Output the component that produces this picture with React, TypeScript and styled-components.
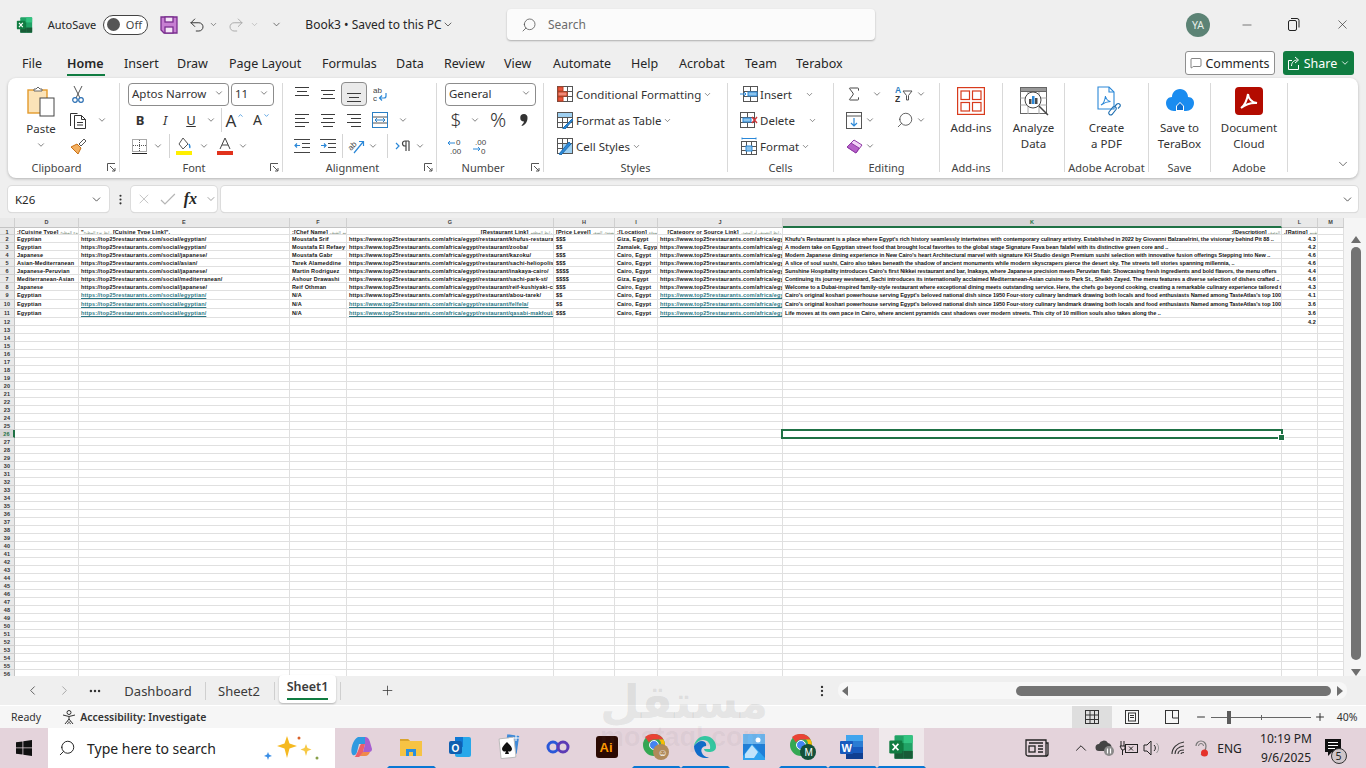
import React from 'react'
import styled, { createGlobalStyle } from 'styled-components'
import {
    ChevronDown, ChevronLeft, ChevronRight, ChevronUp, Minus, MoreHorizontal, MoreVertical,
    Plus, Redo2, Search, Undo2, X, MessageSquare, Sigma,
} from 'lucide-react'

const UI = '"Noto Sans", "Liberation Sans", sans-serif'
const GREEN = '#1f7145'
const INK = '#3b3b3b'

const GlobalStyle = createGlobalStyle`
    html, body { margin: 0; padding: 0; background: #efefef; }
    * { box-sizing: border-box; }
    body { font-family: ${UI}; color: #262626; }
`

const Page = styled.div`
    position: relative;
    width: 1366px;
    height: 768px;
    overflow: hidden;
    background: #efefef;
    display: flex;
    flex-direction: column;
`

/* ---- title bar ---- */

const TitleBar = styled.div`
    height: 45px;
    padding-top: 4px;
    display: flex;
    align-items: center;
    font-size: 12px;
    flex: none;
`
const Slot = styled.div<{ $w: number; $ml?: number }>`
    width: ${p => p.$w}px;
    margin-left: ${p => p.$ml ?? 0}px;
    flex: none;
    display: flex;
    align-items: center;
    justify-content: center;
    white-space: nowrap;
`
const AutoSaveText = styled(Slot)`
    font-size: 11px;
`
const Toggle = styled.div`
    width: 45px;
    height: 20px;
    border: 1px solid #444;
    border-radius: 10px;
    background: #fff;
    display: flex;
    align-items: center;
    padding: 0 5px 0 3px;
    justify-content: space-between;
    font-size: 11px;
    color: #444;
    &::before { content: ''; width: 13px; height: 13px; border-radius: 50%; background: #555; }
`
const SearchBox = styled.div`
    width: 368px;
    height: 31px;
    margin-left: 53px;
    background: #fbfbfb;
    border-radius: 4px;
    box-shadow: 0 1px 2px rgba(0,0,0,.28);
    display: flex;
    align-items: center;
    gap: 11px;
    padding-left: 14px;
    color: #6b6b6b;
    font-size: 12px;
`
const Flip = styled.span`
    display: flex;
    transform: scaleX(-1);
`
const Avatar = styled.div`
    width: 24px;
    height: 24px;
    border-radius: 50%;
    background: #5c8375;
    color: #e6efe9;
    font-size: 10.5px;
    display: flex;
    align-items: center;
    justify-content: center;
`

/* ---- menu tabs ---- */

const TabRow = styled.div`
    height: 33px;
    flex: none;
    display: flex;
    align-items: center;
    padding: 3px 12px 0 22px;
    font-size: 12.5px;
`
const MenuTab = styled.div<{ $w: number; $active?: boolean }>`
    width: ${p => p.$w}px;
    flex: none;
    white-space: nowrap;
    font-weight: ${p => p.$active ? 600 : 400};
    position: relative;
    ${p => p.$active && `
        &::after {
            content: '';
            position: absolute;
            left: 0;
            width: 38px;
            bottom: -4px;
            height: 2px;
            background: #107c41;
        }
    `}
`
const CommentsBtn = styled.div`
    margin-left: auto;
    width: 90px;
    height: 24px;
    background: #fff;
    border: 1px solid #8f8f8f;
    border-radius: 3px;
    display: flex;
    align-items: center;
    justify-content: center;
    gap: 3px;
`
const ShareBtn = styled.div`
    margin-left: 8px;
    width: 71px;
    height: 24px;
    background: #107c41;
    color: #fff;
    border-radius: 3px;
    display: flex;
    align-items: center;
    justify-content: center;
    gap: 3px;
`

/* ---- ribbon ---- */

const Ribbon = styled.div`
    height: 100px;
    margin: 0 8px;
    flex: none;
    background: #fff;
    border-radius: 8px;
    box-shadow: 0 1px 3px rgba(0,0,0,.25);
    display: flex;
    padding-top: 3px;
    font-size: 11.5px;
    color: #333;
`
const Group = styled.div<{ $w: number; $pad?: number }>`
    width: ${p => p.$w}px;
    flex: none;
    position: relative;
    display: flex;
    flex-direction: column;
    padding-left: ${p => p.$pad ?? 0}px;
`
const Divider = styled.div`
    width: 1px;
    flex: none;
    margin: 2px 0 6px;
    background: #d9d9d9;
`
const GroupBody = styled.div`
    height: 78px;
    flex: none;
`
const Row = styled.div`
    height: 26px;
    display: flex;
    align-items: center;
`
const GroupLabel = styled.div`
    height: 16px;
    display: flex;
    align-items: center;
    justify-content: center;
    font-size: 11px;
    color: #444;
    white-space: nowrap;
`
const LabelSpan = styled(GroupLabel)<{ $pad: number; $launch?: boolean }>`
    margin-left: -${p => p.$pad}px;
    padding-right: ${p => p.$launch ? 14 : 0}px;
`
const Launcher = styled.div`
    position: absolute;
    right: 3px;
    bottom: 6px;
    width: 9px;
    height: 9px;
    display: flex;
`
const Tool = styled.div<{ $w: number; $on?: boolean }>`
    width: ${p => p.$w}px;
    height: 24px;
    flex: none;
    display: flex;
    align-items: center;
    justify-content: center;
    ${p => p.$on && `background: #eaeaea; border: 1px solid #8c8c8c; border-radius: 4px;`}
    svg { flex: none; }
`
const Glyph = styled.span<{ $s: number; $light?: boolean }>`
    font-size: ${p => p.$s}px;
    font-weight: ${p => p.$light ? 300 : 400};
    line-height: 1;
    color: #333;
`
const Caret = styled.span`
    align-self: flex-start;
    margin: 4px 0 0 1px;
    display: flex;
`
const VSep = styled.div<{ $ml: number; $mr?: number }>`
    width: 1px;
    height: 24px;
    flex: none;
    margin-left: ${p => p.$ml}px;
    margin-right: ${p => p.$mr ?? 0}px;
    background: #d4d4d4;
`
const Select = styled.div<{ $w: number; $ml?: number }>`
    width: ${p => p.$w}px;
    margin-left: ${p => p.$ml ?? 0}px;
    height: 23px;
    flex: none;
    border: 1px solid #8c8c8c;
    border-radius: 4px;
    display: flex;
    align-items: center;
    justify-content: space-between;
    padding: 0 4px 2px 3px;
    font-size: 11.5px;
`
const StyleItem = styled.div`
    height: 26px;
    display: flex;
    align-items: center;
    gap: 2px;
    white-space: nowrap;
    font-size: 11.5px;
`
const ItemChev = styled.span<{ $ml?: number }>`
    margin-left: ${p => p.$ml ?? 0}px;
    display: flex;
`
const PasteCol = styled.div`
    width: 50px;
    display: flex;
    flex-direction: column;
    align-items: center;
    padding-top: 5px;
    font-size: 11.5px;
    gap: 4px;
`
const ClipWrap = styled.div`
    display: flex;
    height: 78px;
`
const BigBody = styled.div`
    height: 78px;
    flex: none;
    display: flex;
    flex-direction: column;
    align-items: center;
    padding-top: 5px;
    font-size: 11.5px;
    line-height: 16px;
    text-align: center;
    white-space: nowrap;
`
const BigIcon = styled.div`
    height: 30px;
    margin-bottom: 4px;
    display: flex;
    align-items: center;
`
const Collapse = styled.div`
    margin-left: auto;
    align-self: flex-end;
    padding: 0 8px 7px 0;
    display: flex;
`

/* ---- formula bar ---- */

const FormulaBar = styled.div`
    height: 26px;
    margin: 8px 8px 6px;
    flex: none;
    display: flex;
    align-items: stretch;
`
const BarBox = styled.div<{ $w?: number }>`
    ${p => p.$w ? `width: ${p.$w}px; flex: none;` : 'flex: 1;'}
    background: #fff;
    border-radius: 4px;
    box-shadow: 0 0 0 1px #dcdcdc, 0 1px 1px rgba(0,0,0,.15);
    display: flex;
    align-items: center;
`
const NameBox = styled(BarBox)`
    justify-content: space-between;
    padding: 0 6px 0 7px;
    font-size: 11.5px;
`
const FxBox = styled(BarBox)`
    gap: 8px;
    padding-left: 5px;
    font-family: "Liberation Serif", serif;
    font-style: italic;
    font-weight: 700;
    font-size: 16px;
`
const FormulaInput = styled(BarBox)`
    margin-left: 4px;
    justify-content: flex-end;
    padding-right: 4px;
`
const BarDots = styled.div`
    width: 22px;
    flex: none;
    display: flex;
    align-items: center;
    justify-content: center;
`

/* ---- sheet ---- */

const SheetWrap = styled.div`
    height: 458px;
    flex: none;
    display: flex;
    background: #f5f5f5;
`
const COLS = [15, 64, 211, 57, 207, 61, 43, 125, 499, 36, 26]
const ROW_TRACKS = '10px 7px repeat(7, 8px) repeat(3, 9px) repeat(45, 8px)'
const SheetGrid = styled.div`
    width: 1344px;
    flex: none;
    height: 458px;
    overflow: hidden;
    display: grid;
    grid-template-columns: ${COLS.map(c => c + 'px').join(' ')};
    grid-template-rows: ${ROW_TRACKS};
    background: #fff;
    font-family: "Liberation Sans", sans-serif;
    font-size: 5.5px;
    letter-spacing: .15px;
    font-weight: 700;
    color: #111;
    line-height: 8px;
`
const ColHead = styled.div<{ $on?: boolean }>`
    background: ${p => p.$on ? '#d6d6d6' : '#e9e9e9'};
    border-right: 1px solid #d0d0d0;
    border-bottom: ${p => p.$on ? `2px solid ${GREEN}` : '1px solid #c4c4c4'};
    color: ${p => p.$on ? GREEN : '#444'};
    text-align: center;
    line-height: 9px;
`
const RowHead = styled.div<{ $on?: boolean }>`
    background: ${p => p.$on ? '#d6d6d6' : '#e9e9e9'};
    border-bottom: 1px solid #d0d0d0;
    border-right: ${p => p.$on ? `2px solid ${GREEN}` : '1px solid #c4c4c4'};
    color: ${p => p.$on ? GREEN : '#333'};
    text-align: center;
    overflow: hidden;
`
const Cell = styled.div<{ $align?: string }>`
    position: relative;
    border-right: 1px solid #e0e0e0;
    border-bottom: 1px solid #e0e0e0;
    padding: 0 1px 0 2px;
    white-space: nowrap;
    overflow: hidden;
    text-align: ${p => p.$align ?? 'left'};
`
const DescCell = styled(Cell)`
    letter-spacing: -.05px;
`
const SelectedCell = styled(Cell)`
    overflow: visible;
    z-index: 2;
`
const SelBox = styled.div`
    position: absolute;
    inset: -1px -2px -2px -2px;
    border: 2px solid ${GREEN};
    &::after {
        content: '';
        position: absolute;
        right: -3px;
        bottom: -3px;
        width: 5px;
        height: 5px;
        background: ${GREEN};
        outline: 1px solid #fff;
    }
`
const CellLink = styled.span`
    color: #2b7683;
    text-decoration: underline;
`
const Ar = styled.span`
    font-family: "DejaVu Sans", sans-serif;
    font-size: 4px;
    font-weight: 400;
    letter-spacing: 0;
    color: #7d8f7d;
`
const VScroll = styled.div`
    width: 22px;
    flex: none;
    display: flex;
    flex-direction: column;
    align-items: center;
    padding: 18px 0 0 1px;
`
const ArrowUp = styled.div`
    width: 0;
    height: 0;
    border-left: 5px solid transparent;
    border-right: 5px solid transparent;
    border-bottom: 7px solid #6e6e6e;
`
const ArrowDown = styled(ArrowUp)`
    border-bottom: 0;
    border-top: 7px solid #6e6e6e;
`
const VThumb = styled.div`
    width: 10px;
    height: 419px;
    margin: 4px 0 9px;
    border-radius: 5px;
    background: #737373;
`

/* ---- sheet tabs + status ---- */

const TabsBar = styled.div`
    height: 30px;
    flex: none;
    display: flex;
    align-items: center;
    font-size: 13px;
    color: #3b3b3b;
    border-bottom: 1px solid #fff;
`
const SheetTab = styled.div<{ $w: number; $ml?: number }>`
    width: ${p => p.$w}px;
    margin-left: ${p => p.$ml ?? 0}px;
    flex: none;
    text-align: center;
`
const ActiveTab = styled.div`
    width: 57px;
    height: 28px;
    margin: -3px 0 0 4px;
    flex: none;
    background: #fff;
    border-radius: 4px;
    box-shadow: 0 1px 2px rgba(0,0,0,.25);
    font-weight: 600;
    font-size: 12.5px;
    text-align: center;
    padding-top: 3px;
    position: relative;
    &::after {
        content: '';
        position: absolute;
        left: 8px;
        right: 8px;
        bottom: 3px;
        height: 2px;
        background: #107c41;
    }
`
const TabSep = styled.div<{ $ml?: number }>`
    width: 1px;
    height: 18px;
    flex: none;
    margin-left: ${p => p.$ml ?? 0}px;
    background: #cfcfcf;
`
const HScroll = styled.div`
    width: 509px;
    height: 17px;
    flex: none;
    margin-left: 8px;
    border-radius: 8px;
    background: #f7f7f7;
    display: flex;
    align-items: center;
    padding: 0 4px;
`
const ArrowLeft = styled.div`
    width: 0;
    height: 0;
    border-top: 5px solid transparent;
    border-bottom: 5px solid transparent;
    border-right: 6px solid #6e6e6e;
`
const ArrowRight = styled(ArrowLeft)`
    border-right: 0;
    border-left: 6px solid #6e6e6e;
`
const HThumb = styled.div`
    width: 315px;
    height: 10px;
    margin: 0 6px 0 auto;
    border-radius: 5px;
    background: #737373;
`
const StatusBar = styled.div`
    height: 22px;
    flex: none;
    background: #f6f6f6;
    display: flex;
    align-items: center;
    font-size: 10.5px;
    color: #333;
    padding-left: 11px;
`
const StatusStrong = styled.span`
    font-weight: 600;
    margin-left: 4px;
`
const ViewBtn = styled.div<{ $on?: boolean }>`
    width: 40px;
    height: 22px;
    flex: none;
    display: flex;
    align-items: center;
    justify-content: center;
    background: ${p => p.$on ? '#dedede' : 'transparent'};
    ${p => p.$on && 'margin-left: auto;'}
`
const ZoomTrack = styled.div`
    width: 100px;
    height: 1px;
    margin: 0 2px 0 3px;
    flex: none;
    background: #666;
    position: relative;
`
const ZoomThumb = styled.div`
    position: absolute;
    left: 16px;
    top: -6px;
    width: 4px;
    height: 13px;
    background: #5c5c5c;
`
const ZoomTick = styled.div`
    position: absolute;
    left: 50px;
    top: -2px;
    width: 1px;
    height: 5px;
    background: #666;
`

/* ---- taskbar ---- */

const Taskbar = styled.div`
    height: 40px;
    flex: none;
    background: #e4d3db;
    display: flex;
    align-items: stretch;
`
const StartBtn = styled.div`
    width: 48px;
    flex: none;
    display: flex;
    align-items: center;
    justify-content: center;
`
const TaskSearch = styled.div`
    width: 287px;
    flex: none;
    background: #fff;
    display: flex;
    align-items: center;
    padding: 0 10px 0 10px;
    gap: 11px;
    font-size: 14px;
    color: #222;
`
const SearchSpark = styled.div`
    margin-left: auto;
    display: flex;
`
const AppSlot = styled.div<{ $run?: boolean; $on?: boolean; $first?: boolean }>`
    width: 49px;
    flex: none;
    margin-left: ${p => p.$first ? 2.5 : 0}px;
    display: flex;
    align-items: center;
    justify-content: center;
    background: ${p => p.$on ? '#efe8eb' : 'transparent'};
    border-bottom: 2px solid ${p => p.$run ? '#0a78d4' : 'transparent'};
    border-left: 2px solid transparent;
    border-right: 2px solid transparent;
    background-clip: padding-box;
`
const TraySlot = styled.div<{ $w: number; $ml?: number }>`
    width: ${p => p.$w}px;
    margin-left: ${p => p.$ml ?? 0}px;
    flex: none;
    display: flex;
    align-items: center;
    justify-content: center;
    font-size: 12px;
    color: #222;
`
const Clock = styled(TraySlot)`
    flex-direction: column;
    gap: 5px;
    line-height: 14px;
`
const NotifSlot = styled(TraySlot)`
    position: relative;
    justify-content: flex-start;
`
const NotifBadge = styled.div`
    position: absolute;
    left: 6px;
    top: 20px;
    width: 16px;
    height: 16px;
    border-radius: 50%;
    border: 1px solid #333;
    background: #cfc6ca;
    font-size: 10.5px;
    display: flex;
    align-items: center;
    justify-content: center;
`
const Watermark = styled.div`
    position: absolute;
    left: 600px;
    top: 671px;
    font-family: "DejaVu Sans", sans-serif;
    font-weight: 700;
    font-size: 46px;
    line-height: 62px;
    color: rgba(110, 110, 110, .14);
    pointer-events: none;
`
const WatermarkSub = styled.div`
    position: absolute;
    left: 600px;
    top: 722px;
    font-family: "Liberation Sans", sans-serif;
    font-weight: 700;
    font-size: 27px;
    color: rgba(110, 110, 110, .07);
    pointer-events: none;
`

/* ---- drawn icons ---- */

const Chev = ({ s = 10, c = '#444' }: { s?: number; c?: string }) => <ChevronDown size={s} color={c} strokeWidth={1.6} />

const Svg = ({ w = 16, h = 16, children }: { w?: number; h?: number; children: React.ReactNode }) => (
    <svg width={w} height={h} viewBox={`0 0 ${w} ${h}`} fill="none" stroke={INK} strokeWidth={1}>{children}</svg>
)

const Lines = ({ rows }: { rows: [number, number, number][] }) => (
    <Svg w={16} h={16}>
        {rows.map(([x1, x2, y]) => <path key={y} d={`M${x1} ${y}.5H${x2}`} />)}
    </Svg>
)

const ExcelLogo = ({ s = 18 }: { s?: number }) => (
    <svg width={s} height={s} viewBox="0 0 20 20">
        <rect x="5" y="1" width="14" height="18" rx="1" fill="#21a366" />
        <rect x="12" y="1" width="7" height="6" fill="#33c481" />
        <rect x="5" y="7" width="7" height="6" fill="#107c41" />
        <rect x="12" y="13" width="7" height="6" fill="#185c37" />
        <rect x="5" y="13" width="7" height="6" fill="#185c37" />
        <rect x="1" y="5" width="10" height="10" rx="1" fill="#107c41" />
        <path d="M3.500 7.500l4.500 5M8 7.500l-4.500 5" stroke="#fff" strokeWidth="1.400" />
    </svg>
)

const SaveIcon = () => (
    <svg width="18" height="18" viewBox="0 0 18 18" fill="#c77fd2" stroke="#7a2f8f" strokeWidth="1.300">
        <path d="M1 1h16v16H4l-3-3z" />
        <rect x="5" y="1" width="8" height="5" fill="#f4e5f6" />
        <rect x="5" y="11" width="8" height="6" fill="#f4e5f6" />
    </svg>
)

const RestoreIc = () => (
    <svg width="12" height="13" viewBox="0 0 12 13" fill="none" stroke="#222">
        <rect x=".5" y="2.500" width="8" height="10" rx="1.500" />
        <path d="M3 .5h6a2 2 0 0 1 2 2v7" />
    </svg>
)

const ShareIc = () => (
    <svg width="14" height="14" viewBox="0 0 14 14" fill="none" stroke="#fff">
        <path d="M5 4.500H1.500v9h10V9" />
        <path d="M4.500 10c0-4 3-6 6-6M8 1l3.500 3L8 7" />
    </svg>
)

const PasteIcon = () => (
    <svg width="28" height="31" viewBox="0 0 28 31" fill="none">
        <rect x="1" y="4" width="19" height="23" fill="#fbe3b8" stroke="#e39a2c" strokeWidth="1.400" />
        <path d="M7 5V3h2l2-2 2 2h2v2z" fill="#fff" stroke="#666" />
        <rect x="13" y="12" width="14" height="18" fill="#fff" stroke="#444" />
    </svg>
)

const Cut = () => (
    <svg width="12" height="18" viewBox="0 0 12 18" fill="none">
        <path d="M2 1l6 12M10 1L4 13" stroke="#555" />
        <circle cx="3" cy="15" r="2.300" stroke="#2b6fb3" strokeWidth="1.200" />
        <circle cx="9" cy="15" r="2.300" stroke="#2b6fb3" strokeWidth="1.200" />
    </svg>
)

const CopyDoc = () => (
    <svg width="17" height="17" viewBox="0 0 17 17" fill="#fff" stroke="#333">
        <path d="M.5 14V1.500h7" fill="none" />
        <path d="M4.500 3.500h7l4 4v9h-11z" />
        <path d="M11.500 3.500v4h4M7 10.500h6M7 13h6" fill="none" />
    </svg>
)

const Painter = () => (
    <svg width="17" height="17" viewBox="0 0 17 17" fill="none">
        <path d="M1 9l6-3 4 4-3 6z" fill="#f3b061" stroke="#c96f12" />
        <path d="M9 6l5-5 2 2-5 5z" fill="#fff" stroke="#555" />
    </svg>
)

const Borders = () => (
    <svg width="15" height="15" viewBox="0 0 15 15" fill="none" stroke="#555" strokeDasharray="1 1">
        <rect x=".5" y=".5" width="14" height="12" />
        <path d="M7.500 1v11M1 6.500h13" />
        <path d="M0 14.500h15" stroke="#222" strokeDasharray="none" />
    </svg>
)

const FillColor = () => (
    <svg width="17" height="18" viewBox="0 0 17 18" fill="none">
        <path d="M7 1l5 6-5 5-4-5z" stroke="#555" fill="#fff" />
        <path d="M13 7c1 2 1.500 3 .5 4" stroke="#2b88d8" strokeWidth="1.400" />
        <rect y="14" width="16" height="4" fill="#ffef00" />
    </svg>
)

const FontColor = () => (
    <svg width="17" height="18" viewBox="0 0 17 18" fill="none" stroke="#444">
        <path d="M3 12L8 1l5 11M5 8h6" />
        <rect y="14" width="16" height="4" fill="#e1321c" stroke="none" />
    </svg>
)

const Wrap = () => (
    <svg width="16" height="17" viewBox="0 0 16 17" fill="none">
        <text x="0" y="7" fontSize="8" fill="#444" stroke="none" fontFamily="Liberation Sans">ab</text>
        <text x="0" y="15" fontSize="8" fill="#444" stroke="none" fontFamily="Liberation Sans">c</text>
        <path d="M13 7v3a2 2 0 0 1-2 2H7M9 9.500L6.500 12 9 14.500" stroke="#2b88d8" strokeWidth="1.200" />
    </svg>
)

const Merge = () => (
    <svg width="16" height="16" viewBox="0 0 16 16" fill="#fff" stroke="#2b7fc4">
        <rect x=".5" y=".5" width="15" height="15" />
        <path d="M1 5h14M1 11h14" stroke="#555" />
        <path d="M3 8h10M5 6L3 8l2 2M11 6l2 2-2 2" stroke="#2b7fc4" />
    </svg>
)

const Indent = ({ flip }: { flip?: boolean }) => (
    <svg width="16" height="14" viewBox="0 0 16 14" fill="none" stroke="#444">
        <path d="M0 .5h16M8 4.500h8M8 8.500h8M0 13.500h16" />
        <path d={flip ? 'M1 6.500h5M4 4.500l2 2-2 2' : 'M1 6.500h5M3 4.500l-2 2 2 2'} stroke="#2b88d8" strokeWidth="1.200" />
    </svg>
)

const Orient = () => (
    <svg width="17" height="17" viewBox="0 0 17 17" fill="none">
        <text x="0" y="10" fontSize="8" fill="#444" transform="rotate(-45 5 8)" fontFamily="Liberation Sans">ab</text>
        <path d="M6 15L15 4M11 3.500h4.500V8" stroke="#2b88d8" strokeWidth="1.200" />
    </svg>
)

const Rtl = () => (
    <svg width="17" height="12" viewBox="0 0 17 12" fill="none">
        <path d="M1 3l3 3-3 3" stroke="#2b88d8" strokeWidth="1.200" />
        <path d="M11 1v10M14 1v10M14 1H10a2.500 2.500 0 0 0 0 5h1" stroke="#444" strokeWidth="1.200" />
    </svg>
)

const DecMore = ({ out }: { out?: boolean }) => (
    <svg width="20" height="17" viewBox="0 0 20 17" fill="none">
        <text x={out ? 3 : 9} y="7" fontSize="8" fill="#444" fontFamily="Liberation Sans">{out ? '.00' : '0'}</text>
        <text x={out ? 9 : 3} y="16" fontSize="8" fill="#444" fontFamily="Liberation Sans">{out ? '0' : '.00'}</text>
        {out
            ? <path d="M1 11h7M6 9l2 2-2 2" stroke="#2b88d8" />
            : <path d="M1 5h7M3 3L1 5l2 2" stroke="#2b88d8" />}
    </svg>
)

const Comma = () => (
    <svg width="10" height="14" viewBox="0 0 10 14">
        <path d="M5 1a3.500 3.500 0 0 1 3.500 4C8.500 9 6 12 3 13l-.5-.6C4 11 5 9.500 5 8.500a3.500 3.500 0 0 1 0-7.500z" fill="#333" />
    </svg>
)

const Launch = () => (
    <svg width="9" height="9" viewBox="0 0 9 9" fill="none" stroke="#555">
        <path d="M.5 8V.5H8M3 3l5 5M8 5v3H5" />
    </svg>
)

const TableIcon = ({ children }: { children?: React.ReactNode }) => (
    <svg width="18" height="18" viewBox="0 0 18 18" fill="none" stroke="#555">
        <rect x="1.500" y="1.500" width="15" height="15" fill="#fff" />
        <path d="M1.500 6.500h15M1.500 11.500h15M6.500 1.500v15M11.500 1.500v15" />
        {children}
    </svg>
)

const CondFmt = () => (
    <TableIcon>
        <rect x="2" y="2" width="5" height="4" fill="#e8543f" stroke="#c43e1c" />
        <rect x="2" y="7" width="9" height="4" fill="#f08b7a" stroke="#c43e1c" />
        <rect x="2" y="12" width="5" height="4" fill="#e8543f" stroke="#c43e1c" />
    </TableIcon>
)
const FmtTable = () => (
    <TableIcon>
        <rect x="2" y="2" width="14" height="4" fill="#9fd0f1" stroke="none" />
        <path d="M7 17l9-9 1 1-8 9H7z" fill="#2b88d8" stroke="#1f6eb0" />
    </TableIcon>
)
const CellStyle = () => (
    <TableIcon>
        <rect x="7" y="7" width="9" height="9" fill="#9fd0f1" stroke="none" />
        <path d="M3 17l10-12 2 2-10 11z" fill="#2b88d8" stroke="#1f6eb0" />
    </TableIcon>
)
const InsertIc = () => (
    <svg width="18" height="16" viewBox="0 0 18 16" fill="none" stroke="#555">
        <rect x="3.500" y=".5" width="14" height="15" fill="#fff" />
        <path d="M3.500 5.500h14M3.500 10.500h14M10.500 1v14" />
        <rect x="8" y="6" width="9" height="4" fill="#8cc4ec" stroke="#2b88d8" />
        <path d="M0 8h6M4 6l2 2-2 2" stroke="#2b88d8" />
    </svg>
)
const DeleteIc = () => (
    <svg width="18" height="16" viewBox="0 0 18 16" fill="none" stroke="#555">
        <rect x=".5" y=".5" width="14" height="15" fill="#fff" />
        <path d="M.5 5.500h14M.5 10.500h14M7.500 1v14" />
        <rect x="3" y="6" width="8" height="4" fill="#8cc4ec" stroke="#2b88d8" />
        <path d="M12 5l5 6M17 5l-5 6" stroke="#d13438" strokeWidth="1.400" />
    </svg>
)
const FormatIc = () => (
    <svg width="18" height="18" viewBox="0 0 18 18" fill="none" stroke="#555">
        <rect x="1.500" y="4.500" width="15" height="13" fill="#fff" />
        <path d="M6.500 5v12M11.500 5v12M2 9.500h14M2 13.500h14" />
        <rect x="6" y="9" width="6" height="5" fill="#8cc4ec" stroke="#2b88d8" />
        <path d="M2 1.500h14M2 .5v2M16 .5v2" stroke="#2b88d8" />
    </svg>
)
const SortIc = () => (
    <svg width="18" height="18" viewBox="0 0 18 18" fill="none">
        <text x="0" y="8" fontSize="8.500" fill="#2b7fc4" fontFamily="Liberation Sans" fontWeight="700">A</text>
        <text x="0" y="17" fontSize="8.500" fill="#333" fontFamily="Liberation Sans" fontWeight="700">Z</text>
        <path d="M8 6h9l-3.500 4.500V15h-2v-4.500z" stroke="#555" />
    </svg>
)
const FillDown = () => (
    <svg width="16" height="17" viewBox="0 0 16 17" fill="none" stroke="#555">
        <rect x=".5" y=".5" width="15" height="16" fill="#fff" />
        <path d="M1 4h14" />
        <path d="M8 6v8M5 11l3 3 3-3" stroke="#2b88d8" strokeWidth="1.200" />
    </svg>
)
const Eraser = () => (
    <svg width="17" height="15" viewBox="0 0 17 15" fill="none">
        <path d="M1 8l7-7 8 5-6 8z" fill="#f3d4f7" stroke="#8f3aa5" />
        <path d="M1 8l4-4 8 5-3 5z" fill="#b65fc8" stroke="#8f3aa5" />
    </svg>
)
const AddIns = () => (
    <svg width="28" height="28" viewBox="0 0 28 28" fill="none" stroke="#d83b1c" strokeWidth="1.200">
        <rect x=".6" y=".6" width="26.800" height="26.800" />
        <rect x="4" y="4" width="8.500" height="8.500" />
        <rect x="15.500" y="4" width="8.500" height="8.500" />
        <rect x="4" y="15.500" width="8.500" height="8.500" />
        <rect x="15.500" y="15.500" width="8.500" height="8.500" />
    </svg>
)
const Analyze = () => (
    <svg width="30" height="30" viewBox="0 0 30 30" fill="none" stroke="#666">
        <rect x="1.500" y="1.500" width="26" height="26" fill="#fff" />
        <rect x="1.500" y="1.500" width="26" height="4" fill="#999" />
        <path d="M1.500 12h26M1.500 19h26M9 6v22M20 6v22" stroke="#aaa" />
        <circle cx="14" cy="14" r="8" fill="#fff" stroke="#444" />
        <path d="M20 20l9 9" stroke="#444" strokeWidth="1.500" />
        <rect x="10" y="13" width="2.500" height="5" fill="#4a4a4a" stroke="none" />
        <rect x="13" y="10" width="2.500" height="8" fill="#2b88d8" stroke="none" />
        <rect x="16" y="12" width="2.500" height="6" fill="#4a4a4a" stroke="none" />
    </svg>
)
const CreatePdf = () => (
    <svg width="28" height="30" viewBox="0 0 28 30" fill="none" stroke="#2b88d8" strokeWidth="1.100">
        <path d="M5 1h11l5 5v17H5z" fill="#fff" />
        <path d="M16 1v5h5" />
        <path d="M8 19c2-1 4-5 4.500-9 .5 3 2 5 5 5.500-3 0-6 1-9.500 3.500z" />
        <path d="M16 26l4-5a2 2 0 0 1 3 2.500l-4 5a2 2 0 0 1-3-2.500zM22 20l2-2a2 2 0 0 1 3 2.500l-2 2" stroke="#1f6eb0" />
    </svg>
)
const TeraBox = () => (
    <svg width="30" height="26" viewBox="0 0 30 26">
        <path d="M15 1c5 0 8 4 8 8 4 0 6 3 6 6 0 5-4 8-8 8h-2v-5l-4-4-4 4v5H9c-4 0-8-3-8-8 0-3 2-6 6-6 0-4 3-8 8-8z" fill="#1a8cf0" />
        <path d="M15 15l-3 3v4h6v-4z" fill="#0d6fd0" />
    </svg>
)
const AdobeIcon = () => (
    <svg width="28" height="28" viewBox="0 0 28 28">
        <rect width="28" height="28" rx="4" fill="#b30b00" />
        <path d="M6 21c3-2 6-8 7-14 .5 5 3 8 9 9-6-.5-11 1-16 5z" fill="none" stroke="#fff" strokeWidth="2" />
    </svg>
)
const SmallGrid = () => (
    <svg width="14" height="14" viewBox="0 0 14 14" fill="none" stroke="#333">
        <rect x=".5" y=".5" width="13" height="13" />
        <path d="M5 1v12M9.500 1v12M1 5h12M1 9.500h12" />
    </svg>
)
const PageView = () => (
    <svg width="14" height="14" viewBox="0 0 14 14" fill="none" stroke="#333">
        <rect x=".5" y=".5" width="13" height="13" />
        <rect x="3.500" y="3" width="7" height="8" />
        <path d="M5 5.500h4M5 7.500h4" />
    </svg>
)
const BreakView = () => (
    <svg width="14" height="14" viewBox="0 0 14 14" fill="none" stroke="#333">
        <rect x=".5" y=".5" width="13" height="13" />
        <path d="M7.500 1v7H13" />
    </svg>
)
const Person = () => (
    <svg width="14" height="15" viewBox="0 0 14 15" fill="none" stroke="#333">
        <circle cx="7" cy="2.500" r="2" />
        <path d="M1 5l6 1.500L13 5M7 7v2l-4 5M7 9l4 5" />
        <path d="M5 11l4 3M9 11l-4 3" stroke="#666" />
    </svg>
)

const WinLogo = () => (
    <svg width="16" height="16" viewBox="0 0 16 16" fill="#111">
        <path d="M0 2.300L6.500 1.400V7.500H0zM7.300 1.300L16 0V7.500H7.300zM0 8.300H6.500V14.600L0 13.700zM7.300 8.300H16V16L7.300 14.700z" />
    </svg>
)
const Spark = () => (
    <svg width="62" height="32" viewBox="0 0 62 32">
        <path d="M24 4l2.500 7.500L34 14l-7.500 2.500L24 26l-2.500-9.500L14 14l7.500-2.500z" fill="#f5b921" />
        <path d="M43 12l1.500 4 4 1.500-4 1.500L43 24l-1.500-5-4-1.500 4-1.500z" fill="#f7c944" />
        <path d="M5 20l1 2.500L9 24l-3 1-1 3-1-3-3-1 3-1.500z" fill="#3a8ee6" />
        <circle cx="36" cy="6" r="1.500" fill="#d9622b" />
        <circle cx="54" cy="26" r="1.500" fill="#88a04a" />
    </svg>
)
const Copilot = () => (
    <svg width="24" height="24" viewBox="0 0 24 24">
        <path d="M8 2h7l2 7H9L7 17c-1 4-4 4-5 2C0 15 3 4 8 2z" fill="#2f9ae0" />
        <path d="M15 2c2 0 4 1 5 5l2 7c0 2-1 3-3 3h-6l2-8z" fill="#a75fd0" />
        <path d="M4 21h11c3 0 4-2 5-4h-8l-3 5z" fill="#f08a4b" />
        <path d="M8 16c1-3 2-6 3-7h4l-2 8-4 5H5z" fill="#ec5f6a" />
    </svg>
)
const Explorer = () => (
    <svg width="24" height="22" viewBox="0 0 24 22">
        <path d="M1 3h8l2 2h12v15H1z" fill="#f6c344" />
        <path d="M1 3h8l2 2H1z" fill="#d9a42d" />
        <path d="M7 13h10v7H7z" fill="#2a8fde" />
        <path d="M10 16h4v4h-4z" fill="#f6c344" />
    </svg>
)
const Outlook = () => (
    <svg width="24" height="24" viewBox="0 0 24 24">
        <rect x="7" y="2" width="16" height="20" rx="2" fill="#28a8ea" />
        <rect x="7" y="2" width="8" height="10" fill="#0f78d4" />
        <rect x="1" y="6" width="13" height="13" rx="2" fill="#0f5fb0" />
        <text x="3.500" y="16.500" fontSize="10" fontWeight="700" fill="#fff" fontFamily="Liberation Sans">O</text>
    </svg>
)
const Solitaire = () => (
    <svg width="24" height="26" viewBox="0 0 24 26">
        <rect x="9" y="1" width="12" height="18" fill="#3f8ad8" transform="rotate(8 15 10)" />
        <rect x="3" y="4" width="15" height="20" rx="1" fill="#fff" stroke="#bbb" transform="rotate(-6 10 14)" />
        <path d="M10 8c3 3 5 5 5 7a2.500 2.500 0 0 1-4 2l1 3H8l1-3a2.500 2.500 0 0 1-4-2c0-2 2-4 5-7z" fill="#111" />
        <path d="M19 1v6M16 4h6" stroke="#fff" />
    </svg>
)
const Infinity8 = () => (
    <svg width="24" height="14" viewBox="0 0 24 14" fill="none" strokeWidth="3">
        <circle cx="7" cy="7" r="5" stroke="#2b58d8" />
        <circle cx="17" cy="7" r="5" stroke="#5c3bb5" />
    </svg>
)
const AiIcon = () => (
    <svg width="22" height="22" viewBox="0 0 22 22">
        <rect width="22" height="22" rx="3" fill="#2b0a03" />
        <text x="3.500" y="16" fontSize="13" fontWeight="700" fill="#ff9a00" fontFamily="Liberation Sans">Ai</text>
    </svg>
)
const Chrome = ({ badge, bg }: { badge: string; bg: string }) => (
    <svg width="28" height="28" viewBox="0 0 28 28">
        <circle cx="12" cy="12" r="11" fill="#34a853" />
        <path d="M12 1a11 11 0 0 1 9.500 5.500H12a5.500 5.500 0 0 0-5 3L3 4a11 11 0 0 1 9-3z" fill="#ea4335" />
        <path d="M21.500 6.500A11 11 0 0 1 12 23l5-8a5.500 5.500 0 0 0 0-8.500z" fill="#fbbc05" />
        <circle cx="12" cy="12" r="4.500" fill="#4285f4" stroke="#fff" />
        <circle cx="19" cy="19" r="8" fill={bg} />
        <text x="15.500" y="22.500" fontSize="10" fill="#fff" fontFamily="Liberation Sans">{badge}</text>
    </svg>
)
const Edge = () => (
    <svg width="24" height="24" viewBox="0 0 24 24">
        <path d="M12 1a11 11 0 0 1 11 11c0 4-4 5-7 5-3 0-5-1-5-3h6c1-5-2-9-7-9-4 0-7 3-9 6 1-6 6-10 11-10z" fill="#33c6a0" />
        <path d="M1 11c2-3 5-5 8-5 3 0 5 3 4 5-3 0-6 3-4 7 1 3 5 5 8 4-2 1-4 1-5 1C6 23 1 18 1 11z" fill="#0f6cc9" />
    </svg>
)
const Photos = () => (
    <svg width="22" height="26" viewBox="0 0 22 26">
        <rect width="22" height="26" rx="2" fill="#1e7fd8" />
        <rect width="22" height="10" fill="#6bb6f0" />
        <path d="M0 22l9-12 13 14v2H0z" fill="#2fa3ef" />
        <path d="M2 20l7-9 6 7-4 6H2z" fill="#bfe3fb" />
        <circle cx="15" cy="6" r="2.500" fill="#fff" />
    </svg>
)
const Word = () => (
    <svg width="24" height="26" viewBox="0 0 24 26">
        <rect x="6" y="1" width="17" height="24" rx="1" fill="#2b7cd3" />
        <rect x="6" y="1" width="17" height="6" fill="#41a5ee" />
        <rect x="6" y="13" width="17" height="6" fill="#185abd" />
        <rect x="6" y="19" width="17" height="6" fill="#103f91" />
        <rect x="0" y="7" width="13" height="13" rx="1" fill="#185abd" />
        <text x="1.500" y="17.500" fontSize="11" fontWeight="700" fill="#fff" fontFamily="Liberation Sans">W</text>
    </svg>
)
const News = () => (
    <svg width="24" height="20" viewBox="0 0 24 20" fill="none" stroke="#222" strokeWidth="1.300">
        <path d="M1 2h20v16H3a2 2 0 0 1-2-2z" />
        <path d="M21 5h2v11a2 2 0 0 1-2 2" />
        <rect x="4" y="8" width="6" height="6" />
        <path d="M4 5h14M13 8h5M13 11h5M13 14h5" />
    </svg>
)
const CloudPause = () => (
    <svg width="20" height="18" viewBox="0 0 20 18">
        <path d="M4 12a3.500 3.500 0 0 1 0-7 5 5 0 0 1 9-1 4 4 0 0 1 3 6l-3 2z" fill="#444" />
        <circle cx="14" cy="12" r="5" fill="#8a8a8a" />
        <path d="M12.500 9.500v5M15.500 9.500v5" stroke="#fff" strokeWidth="1.200" />
    </svg>
)
const Power = () => (
    <svg width="20" height="16" viewBox="0 0 20 16" fill="none" stroke="#222">
        <rect x="6.500" y="4.500" width="12" height="8" />
        <path d="M2 1v5M5 1v5M1 6h5v2a2 2 0 0 1-4 0zM3.500 10v5" />
        <path d="M10 6.500l4 4M14 6.500l-4 4" />
    </svg>
)
const Volume = () => (
    <svg width="18" height="16" viewBox="0 0 18 16" fill="none" stroke="#222">
        <path d="M1 5h3l4-4v14l-4-4H1z" />
        <path d="M11 5a4 4 0 0 1 0 6" />
        <path d="M13.500 3a7 7 0 0 1 0 10" stroke="#999" />
    </svg>
)
const Wifi = () => (
    <svg width="14" height="14" viewBox="0 0 14 14" fill="none" stroke="#333" strokeWidth="1.100">
        <path d="M1 13C1 7 6 2 13 1" />
        <path d="M4 13c0-4 3-7 9-8" />
        <path d="M7 13c0-2 2-4 6-4" />
        <path d="M10 13c0-1 1-1.500 3-1.500" />
    </svg>
)
const Meet = () => (
    <svg width="16" height="20" viewBox="0 0 16 20" fill="none" stroke="#777">
        <path d="M3 8a5 5 0 0 1 10 0c0 4-1 6-5 9" strokeWidth="1.200" />
        <path d="M5.500 8a2.500 2.500 0 0 1 5 0" />
        <circle cx="11.500" cy="15" r="3.500" fill="#e5322a" stroke="none" />
    </svg>
)
const Notif = () => (
    <svg width="16" height="18" viewBox="0 0 16 18">
        <path d="M0 0h16v13H7l-4 4v-4H0z" fill="#111" />
        <path d="M3 3.500h10M3 6.500h10M3 9.500h7" stroke="#fff" />
    </svg>
)

/* ---- sheet data ---- */

const URL_SOC = 'https://top25restaurants.com/social/'
const URL_RES = 'https://www.top25restaurants.com/africa/egypt/restaurant/'
const URL_CAT = 'https://www.top25restaurants.com/africa/egypt/category/'
const KOSHARI = "Cairo's original koshari powerhouse serving Egypt's beloved national dish since 1950 Four-story culinary landmark drawing both locals and food enthusiasts Named among TasteAtlas's top 100 .."

type Rec = { d: string; e: string; f: string; g: string; gLink?: boolean; h: string; i: string; link?: boolean; k: string; l: string }

const records: Rec[] = [
    { d: 'Egyptian', e: 'egyptian/', f: 'Moustafa Srif', g: 'khufus-restaurant/', h: '$$$', i: 'Giza, Egypt', k: "Khufu's Restaurant is a place where Egypt's rich history seamlessly intertwines with contemporary culinary artistry. Established in 2022 by Giovanni Balzanelrini, the visionary behind Pit 88 ..", l: '4.3' },
    { d: 'Egyptian', e: 'egyptian/', f: 'Moustafa El Refaey', g: 'zooba/', h: '$$', i: 'Zamalek, Egypt', k: 'A modern take on Egyptian street food that brought local favorites to the global stage Signature Fava bean falafel with its distinctive green core and ..', l: '4.2' },
    { d: 'Japanese', e: 'japanese/', f: 'Moustafa Gabr', g: 'kazoku/', h: '$$$', i: 'Cairo, Egypt', k: "Modern Japanese dining experience in New Cairo's heart Architectural marvel with signature KH Studio design Premium sushi selection with innovative fusion offerings Stepping into New ..", l: '4.6' },
    { d: 'Asian-Mediterranean', e: 'asian/', f: 'Tarek Alameddine', g: 'sachi-heliopolis/', h: '$$$', i: 'Cairo, Egypt', k: 'A slice of soul sushi, Cairo also takes beneath the shadow of ancient monuments while modern skyscrapers pierce the desert sky. The streets tell stories spanning millennia, ..', l: '4.6' },
    { d: 'Japanese-Peruvian', e: 'japanese/', f: 'Martin Rodriguez', g: 'inakaya-cairo/', h: '$$$$', i: 'Cairo, Egypt', k: "Sunshine Hospitality introduces Cairo's first Nikkei restaurant and bar, Inakaya, where Japanese precision meets Peruvian flair. Showcasing fresh ingredients and bold flavors, the menu offers", l: '4.4' },
    { d: 'Mediterranean-Asian', e: 'mediterranean/', f: 'Ashour Drawashi', g: 'sachi-park-st/', h: '$$$$', i: 'Giza, Egypt', k: 'Continuing its journey westward, Sachi introduces its internationally acclaimed Mediterranean-Asian cuisine to Park St., Sheikh Zayed. The menu features a diverse selection of dishes crafted ..', l: '4.6' },
    { d: 'Japanese', e: 'japanese/', f: 'Reif Othman', g: 'reif-kushiyaki-cairo/', h: '$$$', i: 'Cairo, Egypt', k: 'Welcome to a Dubai-inspired family-style restaurant where exceptional dining meets outstanding service. Here, the chefs go beyond cooking, creating a remarkable culinary experience tailored t', l: '4.3' },
    { d: 'Egyptian', e: 'egyptian/', f: 'N/A', g: 'abou-tarek/', h: '$$', i: 'Cairo, Egypt', link: true, k: KOSHARI, l: '4.1' },
    { d: 'Egyptian', e: 'egyptian/', f: 'N/A', g: 'felfela/', gLink: true, h: '$$', i: 'Cairo, Egypt', link: true, k: KOSHARI, l: '3.6' },
    { d: 'Egyptian', e: 'egyptian/', f: 'N/A', g: 'qasabi-makfoul/', gLink: true, h: '$$$', i: 'Cairo, Egypt', link: true, k: 'Life moves at its own pace in Cairo, where ancient pyramids cast shadows over modern streets. This city of 10 million souls also takes along the ..', l: '3.6' },
]

const LETTERS = ['D', 'E', 'F', 'G', 'H', 'I', 'J', 'K', 'L', 'M']
const EMPTY_RECORD_CELLS = 10

function HeaderRow() {
    return (
        <>
            <RowHead>1</RowHead>
            <Cell>:[Cuisine Type] <Ar>نوع المطبخ</Ar></Cell>
            <Cell>"<Ar>رابط نوع المطبخ</Ar> [Cuisine Type Link]".</Cell>
            <Cell>:[Chef Name] <Ar>اسم الشيف</Ar></Cell>
            <Cell $align="right">[Restaurant Link] <Ar>رابط المطعم</Ar></Cell>
            <Cell>[Price Level] <Ar>مستوى السعر</Ar></Cell>
            <Cell>:[Location] <Ar>الموقع</Ar></Cell>
            <Cell $align="right">[Category or Source Link] <Ar>رابط التصنيف أو المصدر</Ar></Cell>
            <DescCell $align="right">:[Description] <Ar>الوصف</Ar></DescCell>
            <Cell>.[Rating] <Ar>التقييم</Ar></Cell>
            <Cell />
        </>
    )
}

function DataRow({ rec, n }: { rec: Rec; n: number }) {
    return (
        <>
            <RowHead>{n}</RowHead>
            <Cell>{rec.d}</Cell>
            <Cell>{rec.link ? <CellLink>{URL_SOC + rec.e}</CellLink> : URL_SOC + rec.e}</Cell>
            <Cell>{rec.f}</Cell>
            <Cell>{rec.gLink ? <CellLink>{URL_RES + rec.g}</CellLink> : URL_RES + rec.g}</Cell>
            <Cell>{rec.h}</Cell>
            <Cell>{rec.i}</Cell>
            <Cell>{rec.link ? <CellLink>{URL_CAT}</CellLink> : URL_CAT}</Cell>
            <DescCell>{rec.k}</DescCell>
            <Cell $align="right">{rec.l}</Cell>
            <Cell />
        </>
    )
}

function BlankRow({ n }: { n: number }) {
    return (
        <>
            <RowHead $on={n === 26}>{n}</RowHead>
            {Array.from({ length: EMPTY_RECORD_CELLS }, (_, i) => {
                if (n === 26 && i === 7) return <SelectedCell key={i}><SelBox /></SelectedCell>
                if (n === 12 && i === 8) return <Cell key={i} $align="right">4.2</Cell>
                return <Cell key={i} />
            })}
        </>
    )
}

function Sheet() {
    const blanks = Array.from({ length: 45 }, (_, i) => i + 12)
    return (
        <SheetWrap>
            <SheetGrid>
                <ColHead />
                {LETTERS.map(l => <ColHead key={l} $on={l === 'K'}>{l}</ColHead>)}
                <HeaderRow />
                {records.map((r, i) => <DataRow key={i} rec={r} n={i + 2} />)}
                {blanks.map(n => <BlankRow key={n} n={n} />)}
            </SheetGrid>
            <VScroll>
                <ArrowUp />
                <VThumb />
                <ArrowDown />
            </VScroll>
        </SheetWrap>
    )
}

const menu: [string, number][] = [
    ['File', 45], ['Home', 57], ['Insert', 53], ['Draw', 52], ['Page Layout', 93], ['Formulas', 74], ['Data', 48],
    ['Review', 60], ['View', 49], ['Automate', 78], ['Help', 48], ['Acrobat', 66], ['Team', 51], ['Terabox', 60],
]

function RibbonBar() {
    return (
        <Ribbon>
            <Group $w={111} $pad={8}>
                <ClipWrap>
                    <PasteCol>
                        <PasteIcon />
                        Paste
                        <Chev />
                    </PasteCol>
                    <div>
                        <Row><Tool $w={24}><Cut /></Tool></Row>
                        <Row><Tool $w={24}><CopyDoc /></Tool><Tool $w={24}><Chev /></Tool></Row>
                        <Row><Tool $w={24}><Painter /></Tool></Row>
                    </div>
                </ClipWrap>
                <LabelSpan $pad={8} $launch>Clipboard</LabelSpan>
                <Launcher><Launch /></Launcher>
            </Group>
            <Divider />
            <Group $w={162} $pad={8}>
                <GroupBody>
                    <Row>
                        <Select $w={101}>Aptos Narrow<Chev /></Select>
                        <Select $w={43} $ml={2}>11<Chev /></Select>
                    </Row>
                    <Row>
                        <Tool $w={24}><Glyph $s={13}><b>B</b></Glyph></Tool>
                        <Tool $w={26}><Glyph $s={13}><i>I</i></Glyph></Tool>
                        <Tool $w={26}><Glyph $s={13}><u>U</u></Glyph></Tool>
                        <Tool $w={14}><Chev /></Tool>
                        <VSep $ml={3} />
                        <Tool $w={26}><Glyph $s={17}>A</Glyph><Caret><ChevronUp size={7} color="#2b88d8" strokeWidth={2.5} /></Caret></Tool>
                        <Tool $w={27}><Glyph $s={14}>A</Glyph><Caret><ChevronDown size={7} color="#2b88d8" strokeWidth={2.5} /></Caret></Tool>
                    </Row>
                    <Row>
                        <Tool $w={22}><Borders /></Tool>
                        <Tool $w={16}><Chev /></Tool>
                        <VSep $ml={3} />
                        <Tool $w={28}><FillColor /></Tool>
                        <Tool $w={12}><Chev /></Tool>
                        <Tool $w={30}><FontColor /></Tool>
                        <Tool $w={6}><Chev /></Tool>
                    </Row>
                </GroupBody>
                <LabelSpan $pad={8} $launch>Font</LabelSpan>
                <Launcher><Launch /></Launcher>
            </Group>
            <Divider />
            <Group $w={153} $pad={6}>
                <GroupBody>
                    <Row>
                        <Tool $w={26}><Lines rows={[[1, 15, 1], [3, 13, 5], [1, 15, 9]]} /></Tool>
                        <Tool $w={26}><Lines rows={[[1, 15, 4], [3, 13, 8], [1, 15, 12]]} /></Tool>
                        <Tool $w={26} $on><Lines rows={[[1, 15, 7], [3, 13, 11], [1, 15, 15]]} /></Tool>
                        <Tool $w={28}><Wrap /></Tool>
                    </Row>
                    <Row>
                        <Tool $w={26}><Lines rows={[[1, 15, 2], [1, 11, 6], [1, 15, 10], [1, 11, 14]]} /></Tool>
                        <Tool $w={26}><Lines rows={[[1, 15, 2], [3, 13, 6], [1, 15, 10], [3, 13, 14]]} /></Tool>
                        <Tool $w={26}><Lines rows={[[1, 15, 2], [5, 15, 6], [1, 15, 10], [5, 15, 14]]} /></Tool>
                        <Tool $w={26}><Merge /></Tool>
                        <Tool $w={20}><Chev /></Tool>
                    </Row>
                    <Row>
                        <Tool $w={26}><Indent /></Tool>
                        <Tool $w={26}><Indent flip /></Tool>
                        <VSep $ml={1} />
                        <Tool $w={26}><Orient /></Tool>
                        <Tool $w={8}><Chev /></Tool>
                        <VSep $ml={10} $mr={2} />
                        <Tool $w={26}><Rtl /></Tool>
                        <Tool $w={8}><Chev /></Tool>
                    </Row>
                </GroupBody>
                <LabelSpan $pad={6} $launch>Alignment</LabelSpan>
                <Launcher><Launch /></Launcher>
            </Group>
            <Divider />
            <Group $w={106} $pad={8}>
                <GroupBody>
                    <Row><Select $w={91}>General<Chev /></Select></Row>
                    <Row>
                        <Tool $w={22}><Glyph $s={19} $light>$</Glyph></Tool>
                        <Tool $w={16}><Chev /></Tool>
                        <Tool $w={30}><Glyph $s={20} $light>%</Glyph></Tool>
                        <Tool $w={22}><Comma /></Tool>
                    </Row>
                    <Row>
                        <Tool $w={24}><DecMore /></Tool>
                        <Tool $w={26}><DecMore out /></Tool>
                    </Row>
                </GroupBody>
                <LabelSpan $pad={8} $launch>Number</LabelSpan>
                <Launcher><Launch /></Launcher>
            </Group>
            <Divider />
            <Group $w={183} $pad={12}>
                <GroupBody>
                    <StyleItem><CondFmt />Conditional Formatting<Chev s={9} /></StyleItem>
                    <StyleItem><FmtTable />Format as Table<Chev s={9} /></StyleItem>
                    <StyleItem><CellStyle />Cell Styles<Chev s={9} /></StyleItem>
                </GroupBody>
                <LabelSpan $pad={12}>Styles</LabelSpan>
            </Group>
            <Divider />
            <Group $w={105} $pad={12}>
                <GroupBody>
                    <StyleItem><InsertIc />Insert<ItemChev $ml={11}><Chev s={9} /></ItemChev></StyleItem>
                    <StyleItem><DeleteIc />Delete<ItemChev $ml={11}><Chev s={9} /></ItemChev></StyleItem>
                    <StyleItem><FormatIc />Format<Chev s={9} /></StyleItem>
                </GroupBody>
                <LabelSpan $pad={12}>Cells</LabelSpan>
            </Group>
            <Divider />
            <Group $w={105} $pad={10}>
                <GroupBody>
                    <Row>
                        <Tool $w={20}><Sigma size={18} color="#333" strokeWidth={1.2} /></Tool>
                        <Tool $w={26}><Chev /></Tool>
                        <Tool $w={28}><SortIc /></Tool>
                        <Tool $w={6}><Chev /></Tool>
                    </Row>
                    <Row>
                        <Tool $w={20}><FillDown /></Tool>
                        <Tool $w={12}><Chev /></Tool>
                        <Tool $w={19} />
                        <Tool $w={20}><Flip><Search size={18} color="#333" strokeWidth={1} /></Flip></Tool>
                        <Tool $w={12}><Chev /></Tool>
                    </Row>
                    <Row>
                        <Tool $w={20}><Eraser /></Tool>
                        <Tool $w={12}><Chev /></Tool>
                    </Row>
                </GroupBody>
                <LabelSpan $pad={10}>Editing</LabelSpan>
            </Group>
            <Divider />
            <Group $w={62}>
                <BigBody><BigIcon><AddIns /></BigIcon>Add-ins</BigBody>
                <GroupLabel>Add-ins</GroupLabel>
            </Group>
            <Divider />
            <Group $w={61}>
                <BigBody><BigIcon><Analyze /></BigIcon>Analyze<br />Data</BigBody>
            </Group>
            <Divider />
            <Group $w={83}>
                <BigBody><BigIcon><CreatePdf /></BigIcon>Create<br />a PDF</BigBody>
                <GroupLabel>Adobe Acrobat</GroupLabel>
            </Group>
            <Divider />
            <Group $w={61}>
                <BigBody><BigIcon><TeraBox /></BigIcon>Save to<br />TeraBox</BigBody>
                <GroupLabel>Save</GroupLabel>
            </Group>
            <Divider />
            <Group $w={76}>
                <BigBody><BigIcon><AdobeIcon /></BigIcon>Document<br />Cloud</BigBody>
                <GroupLabel>Adobe</GroupLabel>
            </Group>
            <Divider />
            <Collapse><ChevronDown size={14} color="#444" strokeWidth={1.3} /></Collapse>
        </Ribbon>
    )
}

const apps = [
    { el: <Copilot /> },
    { el: <Explorer />, run: true },
    { el: <Outlook /> },
    { el: <Solitaire /> },
    { el: <Infinity8 /> },
    { el: <AiIcon /> },
    { el: <Chrome badge="☺" bg="#b08a5a" />, run: true },
    { el: <Edge />, run: true },
    { el: <Photos /> },
    { el: <Chrome badge="M" bg="#14513a" />, run: true },
    { el: <Word />, run: true },
    { el: <ExcelLogo s={26} />, run: true, on: true },
]

export default function App() {
    return (
        <Page>
            <GlobalStyle />
            <TitleBar>
                <Slot $w={17} $ml={16}><ExcelLogo /></Slot>
                <AutoSaveText $w={48} $ml={15}>AutoSave</AutoSaveText>
                <Slot $w={45} $ml={7}><Toggle>Off</Toggle></Slot>
                <Slot $w={18} $ml={12}><SaveIcon /></Slot>
                <Slot $w={20} $ml={9}><Undo2 size={18} color="#333" strokeWidth={1.3} /></Slot>
                <Slot $w={12}><Chev s={9} /></Slot>
                <Slot $w={20} $ml={7}><Redo2 size={18} color="#aaa" strokeWidth={1.3} /></Slot>
                <Slot $w={12} $ml={2}><Chev s={9} c="#aaa" /></Slot>
                <Slot $w={14} $ml={9}><Chev s={11} /></Slot>
                <Slot $w={137} $ml={22}>Book3 • Saved to this PC</Slot>
                <Slot $w={12}><Chev s={13} /></Slot>
                <SearchBox>
                    <Flip><Search size={16} color="#555" strokeWidth={1.2} /></Flip>
                    Search
                </SearchBox>
                <Slot $w={24} $ml={311}><Avatar>YA</Avatar></Slot>
                <Slot $w={16} $ml={29}><Minus size={14} color="#222" strokeWidth={1} /></Slot>
                <Slot $w={16} $ml={31}><RestoreIc /></Slot>
                <Slot $w={16} $ml={32}><X size={15} color="#222" strokeWidth={1} /></Slot>
            </TitleBar>
            <TabRow>
                {menu.map(([t, w]) => <MenuTab key={t} $w={w} $active={t === 'Home'}>{t}</MenuTab>)}
                <CommentsBtn><MessageSquare size={12} color="#333" strokeWidth={1.2} />Comments</CommentsBtn>
                <ShareBtn><ShareIc />Share<ChevronDown size={10} color="#fff" /></ShareBtn>
            </TabRow>
            <RibbonBar />
            <FormulaBar>
                <NameBox $w={101}>K26<Chev s={13} /></NameBox>
                <BarDots><MoreVertical size={13} color="#333" /></BarDots>
                <FxBox $w={86}>
                    <X size={16} color="#b5b5b5" strokeWidth={1.2} />
                    <svg width="16" height="16" viewBox="0 0 16 16" fill="none" stroke="#b5b5b5" strokeWidth="1.2"><path d="M1 9l4 4 10-10" /></svg>
                    fx
                    <Chev s={12} c="#888" />
                </FxBox>
                <FormulaInput><Chev s={13} /></FormulaInput>
            </FormulaBar>
            <Sheet />
            <TabsBar>
                <Slot $w={16} $ml={24}><ChevronLeft size={15} color="#444" strokeWidth={1.3} /></Slot>
                <Slot $w={16} $ml={16}><ChevronRight size={15} color="#999" strokeWidth={1.3} /></Slot>
                <Slot $w={16} $ml={15}><MoreHorizontal size={14} color="#333" strokeWidth={2.2} /></Slot>
                <SheetTab $w={80} $ml={15}>Dashboard</SheetTab>
                <TabSep $ml={7} />
                <SheetTab $w={66}>Sheet2</SheetTab>
                <TabSep $ml={2} />
                <ActiveTab>Sheet1</ActiveTab>
                <TabSep $ml={4} />
                <Slot $w={16} $ml={38}><Plus size={15} color="#333" strokeWidth={1.2} /></Slot>
                <Slot $w={16} $ml={419}><MoreVertical size={14} color="#333" strokeWidth={2} /></Slot>
                <HScroll>
                    <ArrowLeft />
                    <HThumb />
                    <ArrowRight />
                </HScroll>
            </TabsBar>
            <StatusBar>
                Ready
                <Slot $w={15} $ml={20}><Person /></Slot>
                <StatusStrong>Accessibility: Investigate</StatusStrong>
                <ViewBtn $on><SmallGrid /></ViewBtn>
                <ViewBtn><PageView /></ViewBtn>
                <ViewBtn><BreakView /></ViewBtn>
                <Slot $w={14} $ml={2}><Minus size={12} color="#333" /></Slot>
                <ZoomTrack><ZoomThumb /><ZoomTick /></ZoomTrack>
                <Slot $w={14}><Plus size={12} color="#333" /></Slot>
                <Slot $w={30} $ml={5}>40%</Slot>
                <Slot $w={4} />
            </StatusBar>
            <Taskbar>
                <StartBtn><WinLogo /></StartBtn>
                <TaskSearch>
                    <Flip><Search size={18} color="#222" strokeWidth={1.3} /></Flip>
                    Type here to search
                    <SearchSpark><Spark /></SearchSpark>
                </TaskSearch>
                {apps.map((a, i) => <AppSlot key={i} $first={i === 0} $run={a.run} $on={a.on}>{a.el}</AppSlot>)}
                <TraySlot $w={48} $ml={87}><News /></TraySlot>
                <TraySlot $w={28} $ml={6}><ChevronUp size={18} color="#222" strokeWidth={1.3} /></TraySlot>
                <TraySlot $w={20}><CloudPause /></TraySlot>
                <TraySlot $w={28}><Power /></TraySlot>
                <TraySlot $w={18}><Volume /></TraySlot>
                <TraySlot $w={24} $ml={5}><Wifi /></TraySlot>
                <TraySlot $w={22}><Meet /></TraySlot>
                <TraySlot $w={36}>ENG</TraySlot>
                <Clock $w={77}><span>10:19 PM</span><span>9/6/2025</span></Clock>
                <NotifSlot $w={38}><Notif /><NotifBadge>5</NotifBadge></NotifSlot>
            </Taskbar>
            <Watermark>مستقل</Watermark>
            <WatermarkSub>mostaql.com</WatermarkSub>
        </Page>
    )
}
